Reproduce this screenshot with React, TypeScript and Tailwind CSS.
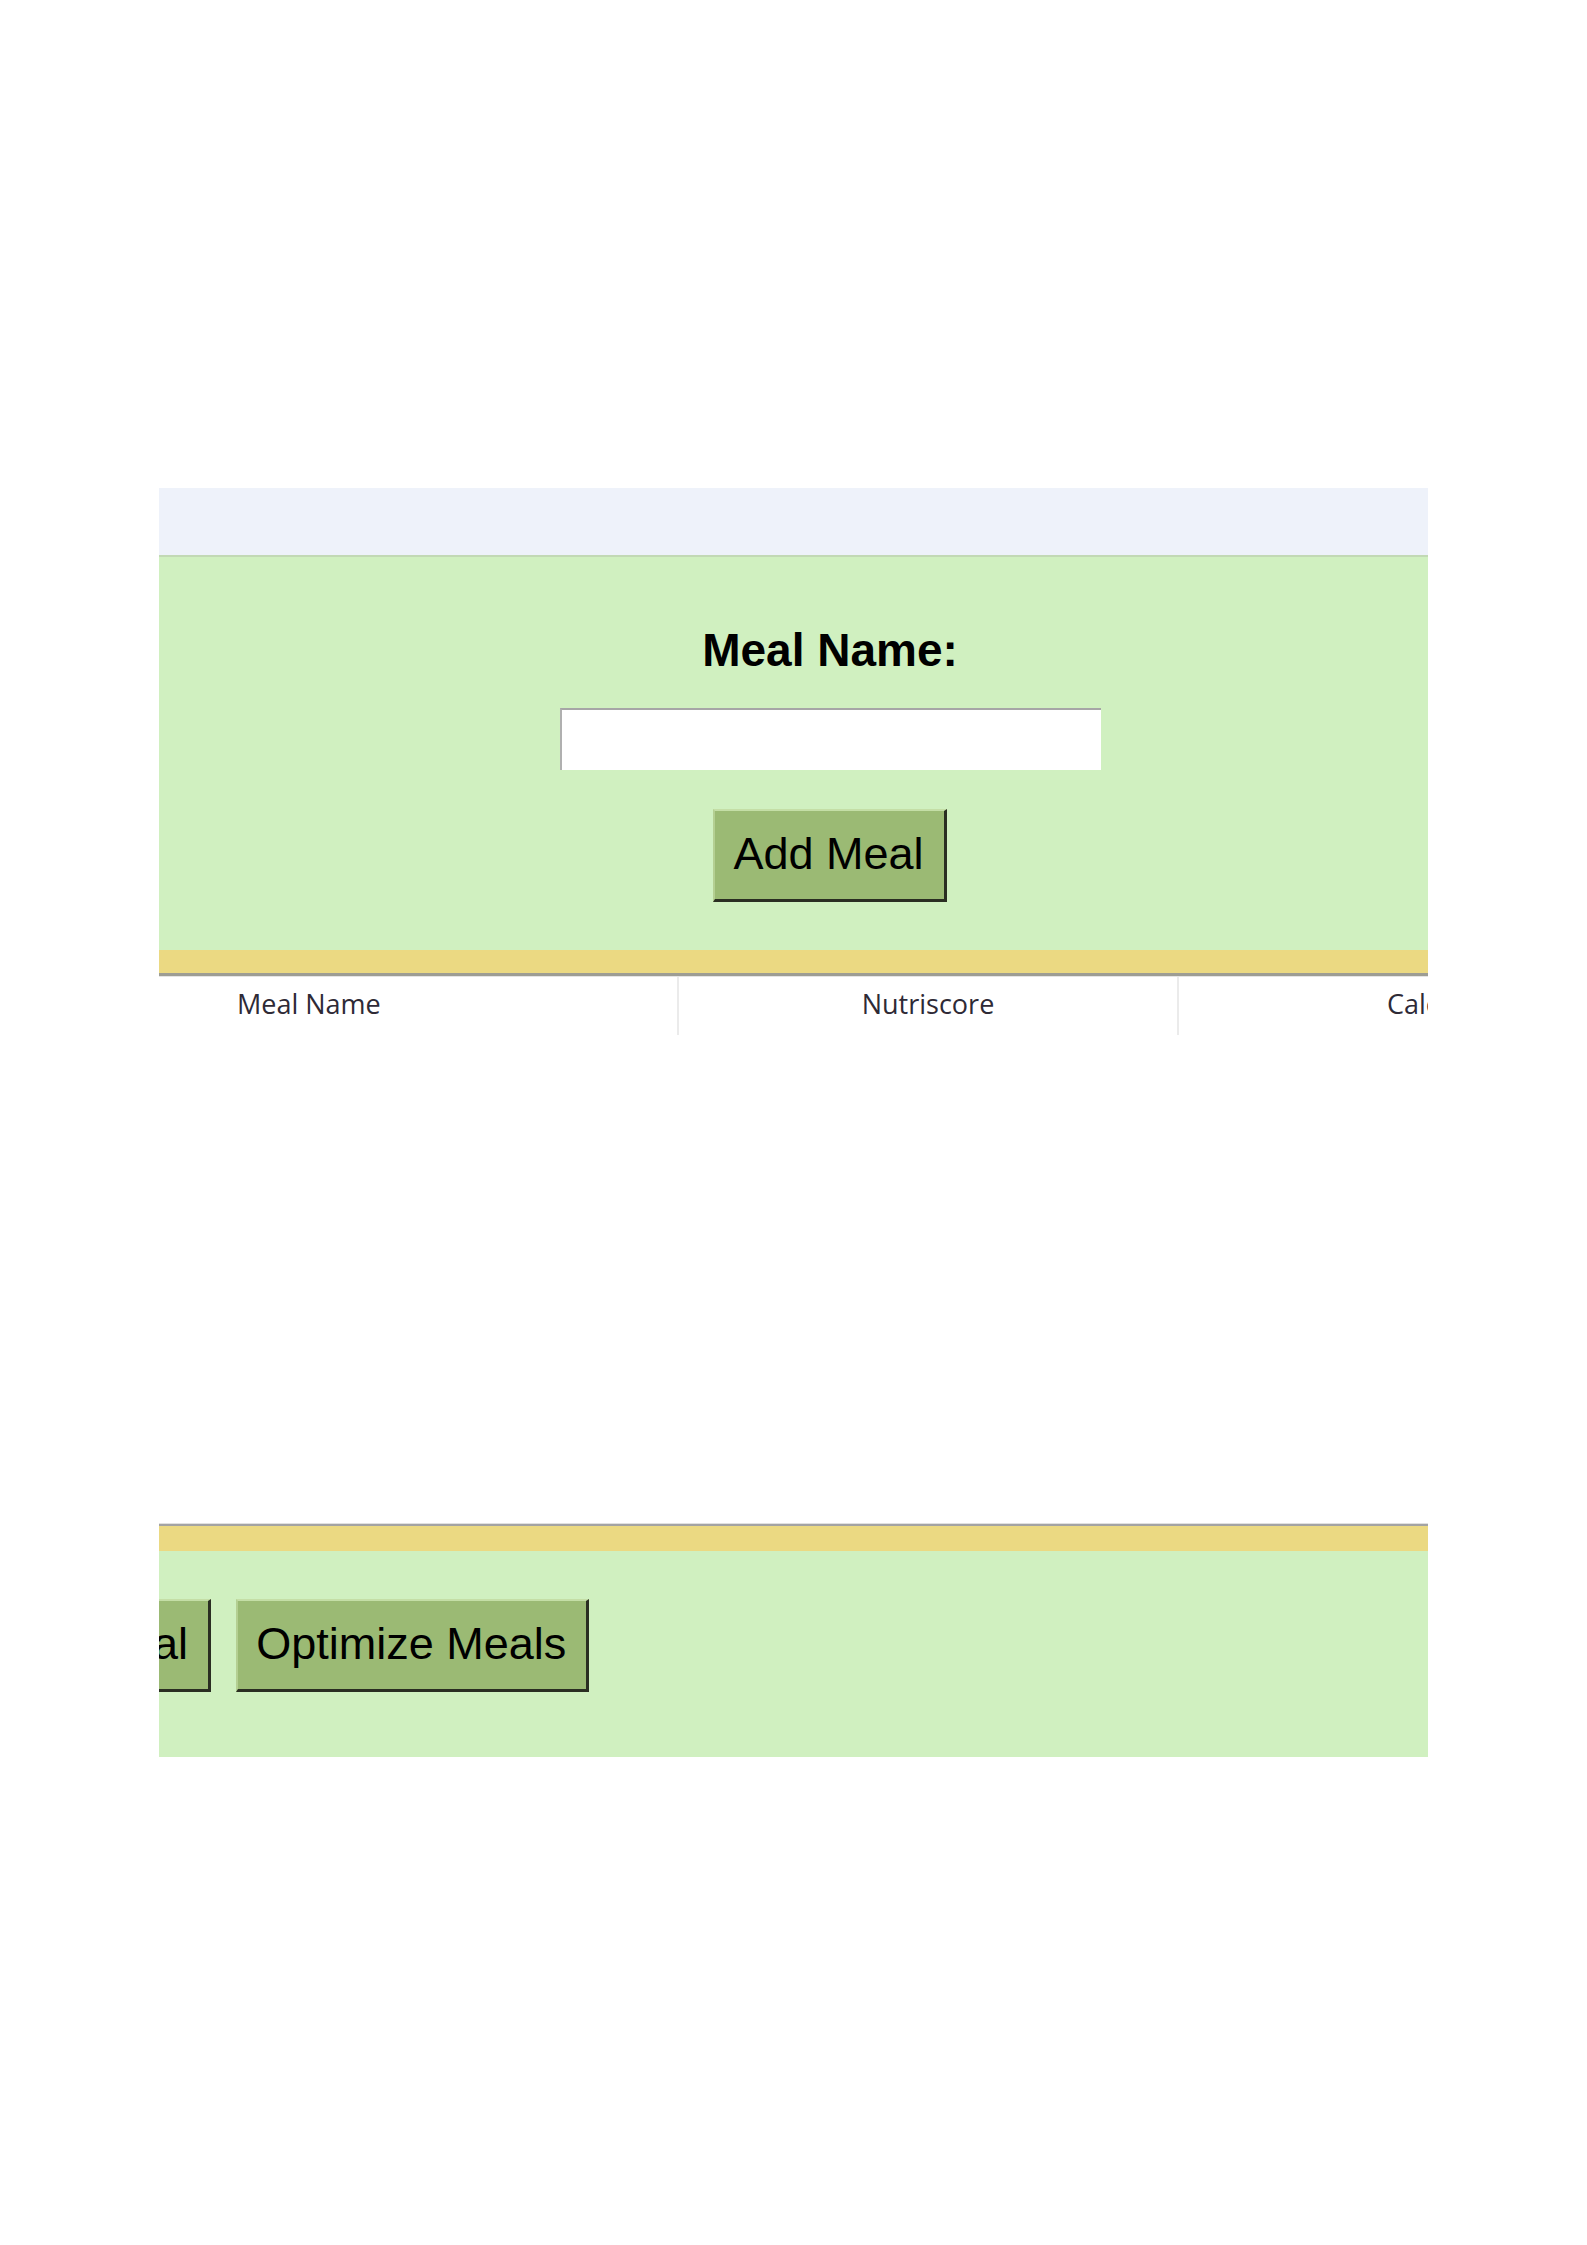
import React, { useState } from 'react';

const arial = { fontFamily: '"Liberation Sans", Arial, sans-serif' };

const RaisedButton: React.FC<{ label: string; className?: string }> = ({ label, className = '' }) => (
  <button
    className={`shrink-0 bg-[#9bba74] border-t-2 border-l-2 border-t-[#c4dea6] border-l-[#b4cf92] border-r-[3px] border-b-[3px] border-r-[#2a2e22] border-b-[#2a2e22] pl-[18px] pr-[20px] pt-[20px] pb-[23px] text-[45px] leading-none text-black whitespace-nowrap font-['Liberation_Sans',Arial,sans-serif] ${className}`}
  >
    {label}
  </button>
);

export default function App() {
  const [mealName, setMealName] = useState('');

  return (
    <div className="min-h-screen bg-white pt-[488px]" style={arial}>
      {/* visible window, content runs past both edges */}
      <div className="ml-[159px] w-[1269px] overflow-hidden">
        {/* Header strip */}
        <div className="w-[1342px] h-[67px] bg-[#eef2fa]" />
        <div className="w-[1342px] h-[2px] bg-[#c2d9b5]" />

        {/* Add meal form */}
        <div className="w-[1342px] bg-[#d0f0c0] flex flex-col items-center pt-[70px] pb-[48px]">
          <h2 className="text-[46px] leading-none font-bold text-black font-['Liberation_Sans',Arial,sans-serif]">
            Meal Name:
          </h2>
          <input
            value={mealName}
            onChange={(e) => setMealName(e.target.value)}
            className="mt-[35px] w-[541px] h-[62px] bg-white border-t-2 border-l-2 border-t-[#a6a6a6] border-l-[#b0b0b0] outline-none px-2 text-[24px]"
          />
          <RaisedButton label="Add Meal" className="mt-[39px]" />
        </div>

        {/* Table */}
        <div className="w-[1342px] h-[23px] bg-[#ebd982]" />
        <div className="w-[1342px] h-[3px] bg-[#9d9d94]" />
        <div className="w-[1342px] h-px bg-[#e4e4e4]" />
        <div className="flex w-[1537px] h-[58px] text-[27px] leading-none text-[#2e2a36] font-['Open_Sans',sans-serif]">
          <div className="w-[520px] pl-[78px] pt-[13px] border-r-2 border-[#ebebeb]">Meal Name</div>
          <div className="w-[500px] pt-[13px] text-center border-r-2 border-[#ebebeb]">Nutriscore</div>
          <div className="w-[517px] pt-[13px] text-center">Calories</div>
        </div>

        {/* empty table body */}
        <div className="h-[488px]" />

        {/* Footer actions */}
        <div className="w-[1342px] h-px bg-[#e0e0e0]" />
        <div className="w-[1342px] h-[2px] bg-[#a3a3a3]" />
        <div className="w-[1342px] h-[25px] bg-[#ebd982]" />
        <div className="w-[1342px] h-[206px] bg-[#d0f0c0] pt-[48px] flex items-start gap-[25px]">
          <RaisedButton label="Delete Meal" className="-ml-[231px]" />
          <RaisedButton label="Optimize Meals" />
        </div>
      </div>
    </div>
  );
}
